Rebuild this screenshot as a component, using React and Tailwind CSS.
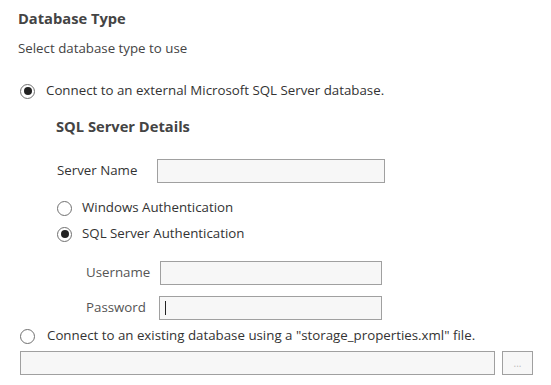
import React from "react";

function Radio({ checked }) {
  return (
    <span className="relative flex h-[15px] w-[15px] shrink-0 items-center justify-center rounded-full border border-[#707070] bg-white">
      {checked && <span className="h-[8px] w-[8px] rounded-full bg-[#222]" />}
    </span>
  );
}

function Input({ w, cursor }) {
  return (
    <div className={`flex h-[24px] items-center border border-[#a0a0a0] bg-[#f7f7f7] pl-[5px] ${w}`}>
      {cursor && <span className="h-[14px] w-px bg-[#222]" />}
    </div>
  );
}

export default function App() {
  return (
    <div
      className="flex h-[385px] w-[551px] flex-col bg-white text-[13.3px] text-[#333]"
      style={{ fontFamily: '"Open Sans", "Noto Sans", sans-serif' }}
    >
      <div className="mt-[8px] flex h-[20px] items-center pl-[18px] text-[14.7px] font-bold text-[#444]">
        Database Type
      </div>
      <div className="mt-[11px] flex h-[20px] items-center pl-[18px] text-[#444]">
        Select database type to use
      </div>
      <div className="mt-[22px] flex h-[20px] items-center gap-[11px] pl-[20px]">
        <Radio checked />
        <span>Connect to an external Microsoft SQL Server database.</span>
      </div>
      <div className="mt-[15px] flex h-[20px] items-center pl-[56px] text-[14.7px] font-bold text-[#444]">
        SQL Server Details
      </div>
      <div className="mt-[23px] flex h-[24px] items-center pl-[57px]">
        <span className="w-[100px]">Server Name</span>
        <Input w="w-[228px]" />
      </div>
      <div className="mt-[15px] flex h-[20px] items-center gap-[10px] pl-[57px]">
        <Radio />
        <span>Windows Authentication</span>
      </div>
      <div className="mt-[6px] flex h-[20px] items-center gap-[10px] pl-[57px]">
        <Radio checked />
        <span>SQL Server Authentication</span>
      </div>
      <div className="mt-[17px] flex h-[24px] items-center pl-[86px] text-[#555]">
        <span className="w-[74px]">Username</span>
        <Input w="w-[222px]" />
      </div>
      <div className="mt-[11px] flex h-[24px] items-center pl-[86px] text-[#555]">
        <span className="w-[73px]">Password</span>
        <Input w="w-[223px]" cursor />
      </div>
      <div className="mt-[6px] flex h-[20px] items-center gap-[12px] pl-[20px]">
        <Radio />
        <span>Connect to an existing database using a "storage_properties.xml" file.</span>
      </div>
      <div className="mt-[5px] flex h-[24px] items-center pl-[20px]">
        <div className="h-[24px] w-[475px] border border-[#a0a0a0] bg-[#f7f7f7]" />
        <div className="ml-[7px] flex h-[24px] w-[31px] items-center justify-center border border-[#a0a0a0] bg-[#f7f7f7] text-[10px] leading-none text-[#bbb]">
          ...
        </div>
      </div>
    </div>
  );
}
